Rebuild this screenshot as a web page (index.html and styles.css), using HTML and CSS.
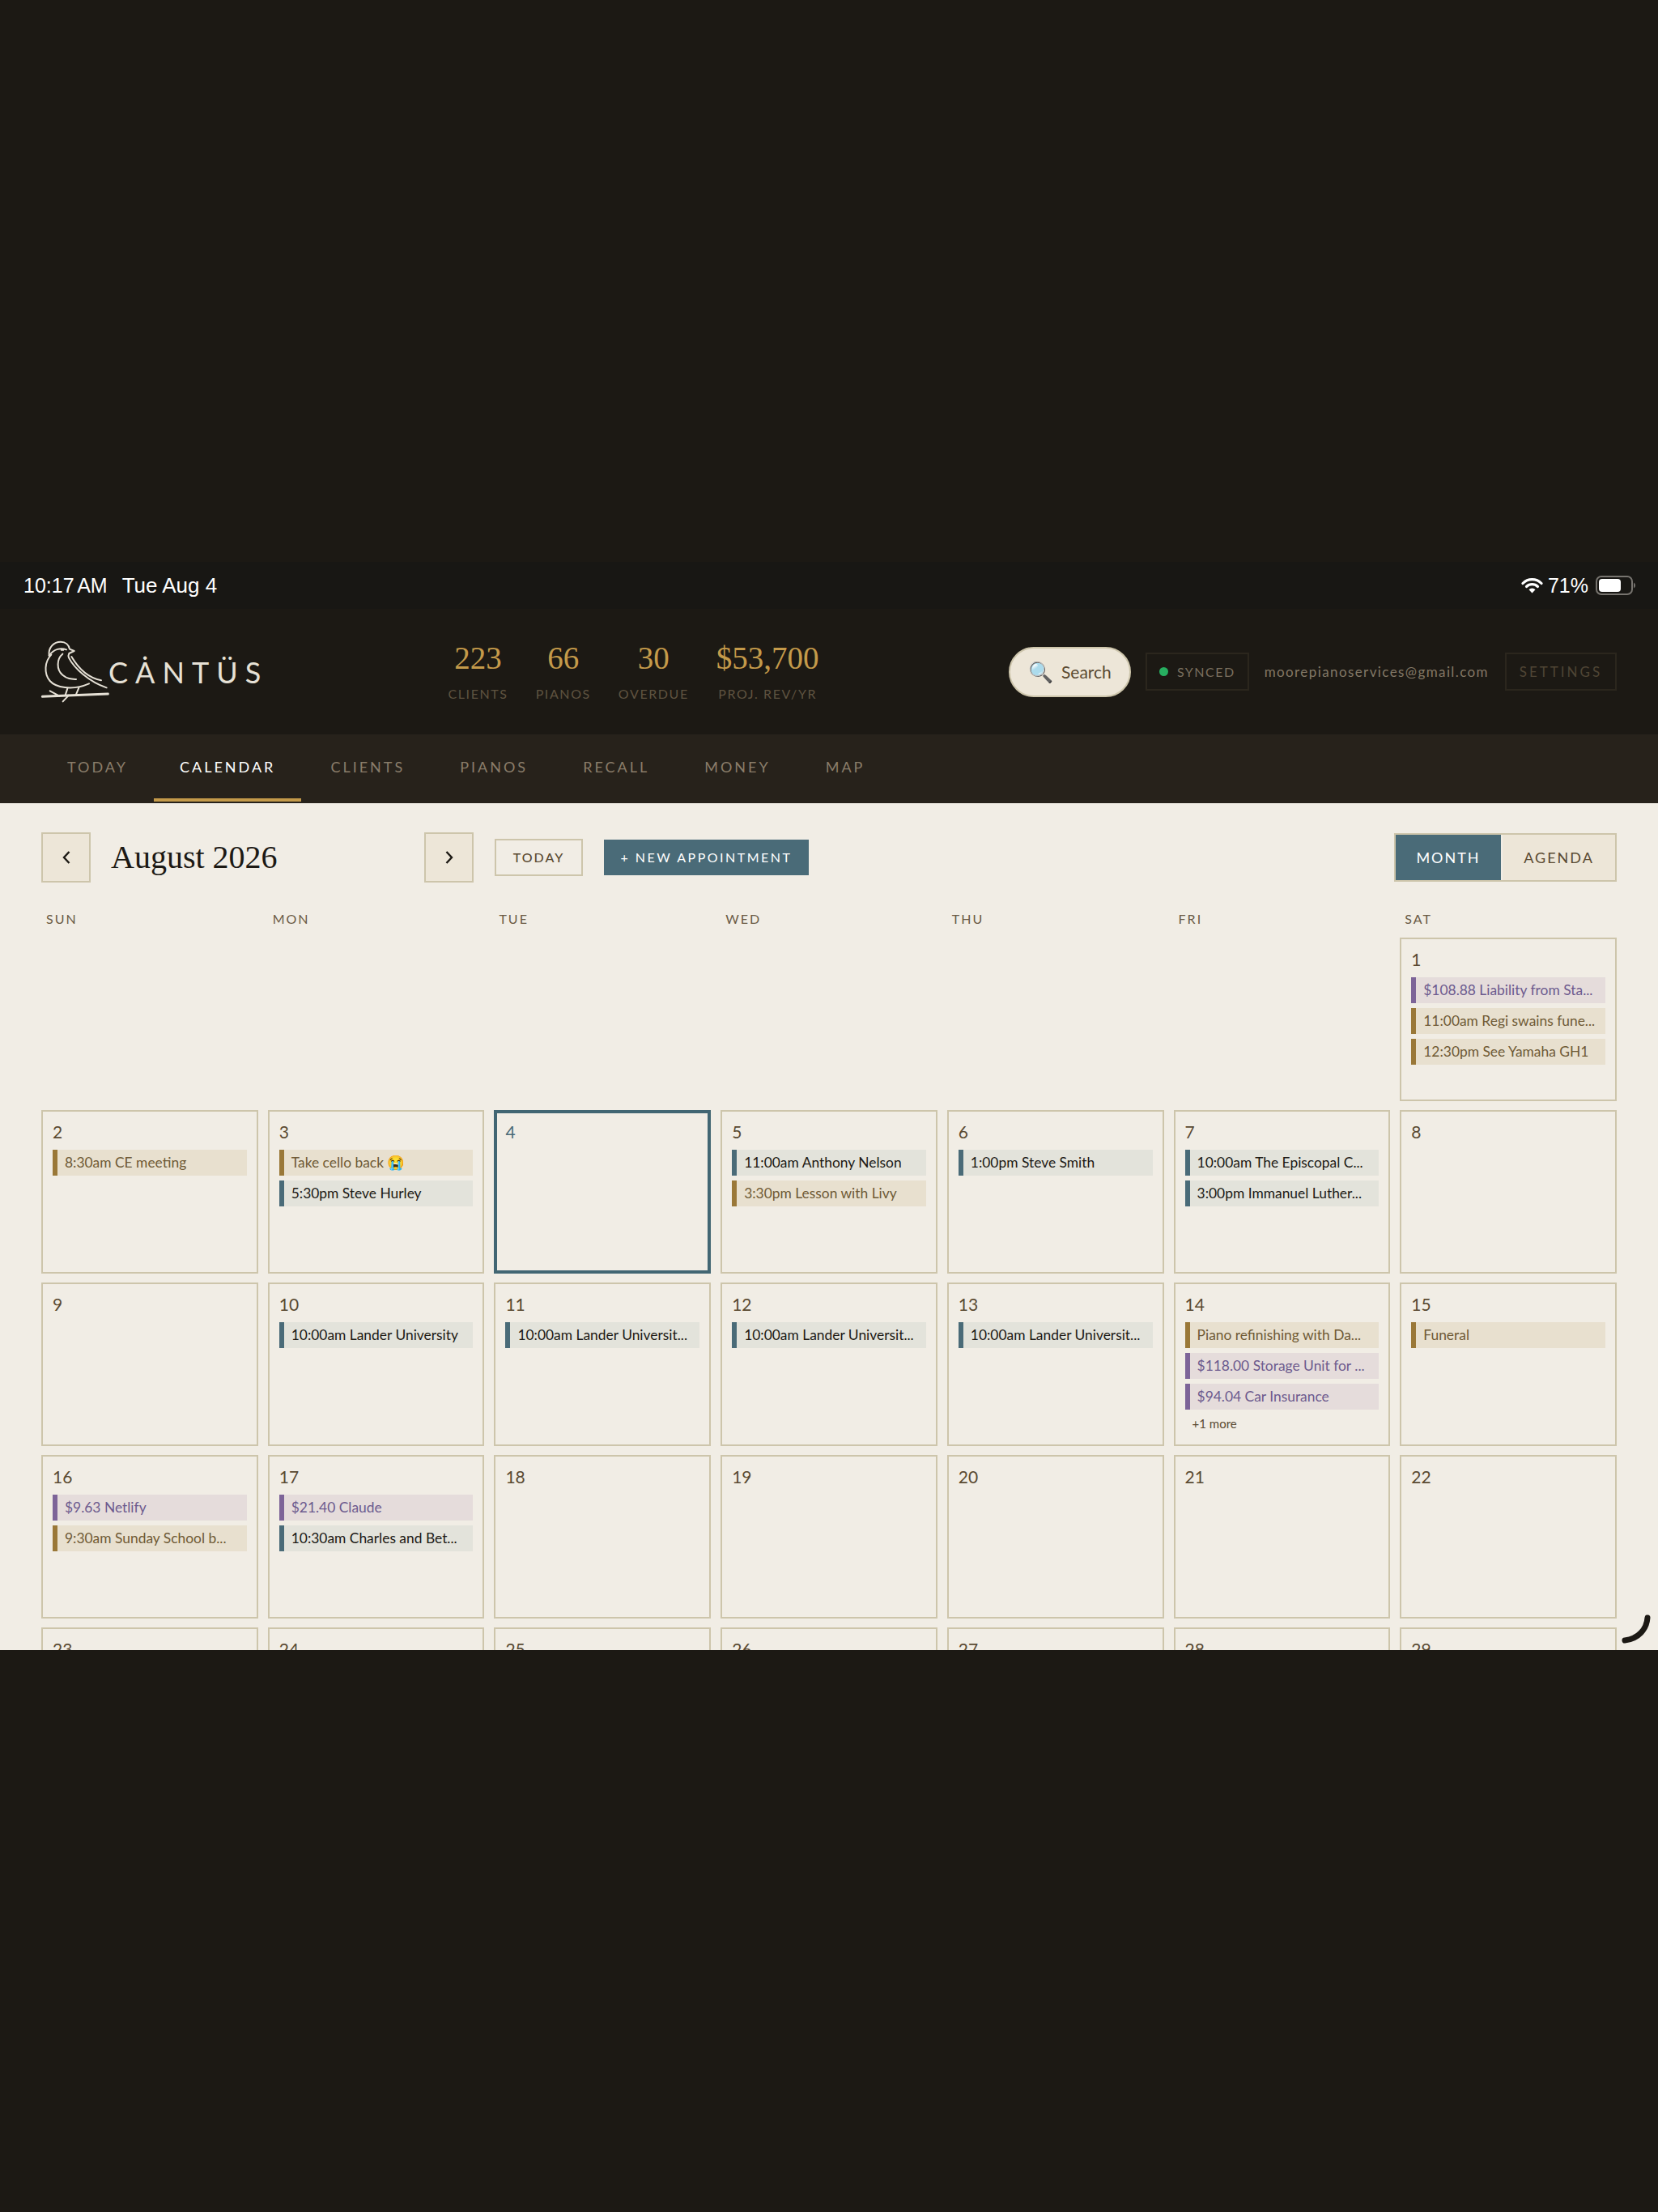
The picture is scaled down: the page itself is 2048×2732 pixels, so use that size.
FILE: index.html
```html
<!DOCTYPE html>
<html lang="en">
<head>
<meta charset="UTF-8">
<meta name="viewport" content="width=device-width, initial-scale=1.0">
<title>Cantus - Calendar</title>
<link rel="stylesheet" href="styles.css">
</head>
<body>
  <div class="statusbar">
    <div class="status-left"><span class="clock">10:17 AM</span><span class="date">Tue Aug 4</span></div>
    <div class="status-right">
      <svg class="wifi" width="27" height="20" viewBox="0 0 27 20">
        <path d="M2 7.5a16 16 0 0 1 23 0" fill="none" stroke="#fff" stroke-width="3.2" stroke-linecap="round"/>
        <path d="M6.5 11.5a10 10 0 0 1 14 0" fill="none" stroke="#fff" stroke-width="3.2" stroke-linecap="round"/>
        <path d="M13.5 19.5l-4-4.3a5.6 5.6 0 0 1 8 0z" fill="#fff"/>
      </svg>
      <span class="battery-pct">71%</span>
      <svg class="battery" width="50" height="24" viewBox="0 0 50 24">
        <rect x="1" y="1" width="44" height="22" rx="6" fill="none" stroke="#77746f" stroke-width="2"/>
        <rect x="4" y="4" width="27" height="16" rx="4" fill="#fff"/>
        <path d="M47 8.5a4 4 0 0 1 0 7z" fill="#77746f"/>
      </svg>
    </div>
  </div>

  <header class="header">
    <div class="logo">
      <svg class="bird" width="85" height="79" viewBox="90 60 255 235" fill="none" stroke="#e6e1d6" stroke-width="6" stroke-linecap="round" stroke-linejoin="round">
        <path d="M122 118C118 88 140 67 165 67C183 67 195 78 198 94L215 101L196 110C193 116 192 120 195 126C215 165 270 215 335 237"/>
        <path d="M122 118C140 93 165 88 186 96"/>
        <path d="M168 97h6" stroke-width="7"/>
        <path d="M130 115C105 140 102 185 125 212C145 235 205 250 270 222"/>
        <path d="M172 112C150 130 148 170 172 190C190 205 205 205 222 206"/>
        <path d="M205 122C230 165 265 200 315 210"/>
        <path d="M190 240L182 265M232 238L222 262"/>
        <path d="M97 270L340 260" stroke-width="9"/>
        <path d="M125 249L160 268M173 288L195 265"/>
      </svg>
      <span class="wordmark">CȦNTÜS</span>
    </div>

    <div class="stats">
      <div class="stat"><div class="stat-num">223</div><div class="stat-label">Clients</div></div>
      <div class="stat"><div class="stat-num">66</div><div class="stat-label">Pianos</div></div>
      <div class="stat"><div class="stat-num">30</div><div class="stat-label">Overdue</div></div>
      <div class="stat"><div class="stat-num">$53,700</div><div class="stat-label">Proj. Rev/Yr</div></div>
    </div>

    <div class="header-right">
      <button class="search-btn"><span class="search-icon">🔍</span>Search</button>
      <div class="synced"><span class="dot"></span>SYNCED</div>
      <span class="email">moorepianoservices@gmail.com</span>
      <button class="settings-btn">SETTINGS</button>
    </div>
  </header>

  <nav class="nav">
    <a class="tab">TODAY</a>
    <a class="tab active">CALENDAR</a>
    <a class="tab">CLIENTS</a>
    <a class="tab">PIANOS</a>
    <a class="tab">RECALL</a>
    <a class="tab">MONEY</a>
    <a class="tab">MAP</a>
  </nav>

  <main class="main">
    <div class="toolbar">
      <button class="arrow-btn">
        <svg width="14" height="20" viewBox="0 0 14 20"><path d="M10.500 3L4 10l6.500 7" fill="none" stroke="#1c1914" stroke-width="2.400"/></svg>
      </button>
      <h1 class="month-title">August 2026</h1>
      <button class="arrow-btn">
        <svg width="14" height="20" viewBox="0 0 14 20"><path d="M3.500 3L10 10l-6.500 7" fill="none" stroke="#1c1914" stroke-width="2.400"/></svg>
      </button>
      <button class="today-btn">TODAY</button>
      <button class="new-btn">+ NEW APPOINTMENT</button>
      <div class="view-toggle">
        <button class="view-btn active">MONTH</button>
        <button class="view-btn">AGENDA</button>
      </div>
    </div>

    <div class="weekdays">
      <div>SUN</div><div>MON</div><div>TUE</div><div>WED</div><div>THU</div><div>FRI</div><div>SAT</div>
    </div>

    <div class="grid">
      <div class="blank"></div><div class="blank"></div><div class="blank"></div><div class="blank"></div><div class="blank"></div><div class="blank"></div>
      <div class="day"><div class="day-num">1</div>
        <div class="event money">$108.88 Liability from Sta...</div>
        <div class="event personal">11:00am Regi swains fune...</div>
        <div class="event personal">12:30pm See Yamaha GH1</div>
      </div>

      <div class="day"><div class="day-num">2</div>
        <div class="event personal">8:30am CE meeting</div>
      </div>
      <div class="day"><div class="day-num">3</div>
        <div class="event personal">Take cello back 😭</div>
        <div class="event appt">5:30pm Steve Hurley</div>
      </div>
      <div class="day today"><div class="day-num">4</div></div>
      <div class="day"><div class="day-num">5</div>
        <div class="event appt">11:00am Anthony Nelson</div>
        <div class="event personal">3:30pm Lesson with Livy</div>
      </div>
      <div class="day"><div class="day-num">6</div>
        <div class="event appt">1:00pm Steve Smith</div>
      </div>
      <div class="day"><div class="day-num">7</div>
        <div class="event appt">10:00am The Episcopal C...</div>
        <div class="event appt">3:00pm Immanuel Luther...</div>
      </div>
      <div class="day"><div class="day-num">8</div></div>

      <div class="day"><div class="day-num">9</div></div>
      <div class="day"><div class="day-num">10</div>
        <div class="event appt">10:00am Lander University</div>
      </div>
      <div class="day"><div class="day-num">11</div>
        <div class="event appt">10:00am Lander Universit...</div>
      </div>
      <div class="day"><div class="day-num">12</div>
        <div class="event appt">10:00am Lander Universit...</div>
      </div>
      <div class="day"><div class="day-num">13</div>
        <div class="event appt">10:00am Lander Universit...</div>
      </div>
      <div class="day"><div class="day-num">14</div>
        <div class="event personal">Piano refinishing with Da...</div>
        <div class="event money">$118.00 Storage Unit for ...</div>
        <div class="event money">$94.04 Car Insurance</div>
        <div class="more">+1 more</div>
      </div>
      <div class="day"><div class="day-num">15</div>
        <div class="event personal">Funeral</div>
      </div>

      <div class="day"><div class="day-num">16</div>
        <div class="event money">$9.63 Netlify</div>
        <div class="event personal">9:30am Sunday School b...</div>
      </div>
      <div class="day"><div class="day-num">17</div>
        <div class="event money">$21.40 Claude</div>
        <div class="event appt">10:30am Charles and Bet...</div>
      </div>
      <div class="day"><div class="day-num">18</div></div>
      <div class="day"><div class="day-num">19</div></div>
      <div class="day"><div class="day-num">20</div></div>
      <div class="day"><div class="day-num">21</div></div>
      <div class="day"><div class="day-num">22</div></div>

      <div class="day"><div class="day-num">23</div></div>
      <div class="day"><div class="day-num">24</div></div>
      <div class="day"><div class="day-num">25</div></div>
      <div class="day"><div class="day-num">26</div></div>
      <div class="day"><div class="day-num">27</div></div>
      <div class="day"><div class="day-num">28</div></div>
      <div class="day"><div class="day-num">29</div></div>
    </div>

    <svg class="corner" width="40" height="38" viewBox="0 0 40 38">
      <path d="M33 4C32 18 22 30 5 32" fill="none" stroke="#1c1914" stroke-width="7" stroke-linecap="round"/>
    </svg>
  </main>
</body>
</html>
```

FILE: styles.css
```css
body {
  margin: 0;
  height: 2732px;
  padding-top: 694px;
  box-sizing: border-box;
  overflow: hidden;
  background-color: #1c1914;
  font-family: Lato, "Noto Sans", sans-serif;
  color: #1c1914;
}

button {
  font-family: inherit;
  cursor: pointer;
}

/* ipad status bar */
.statusbar {
  height: 58px;
  padding: 0 27px 0 29px;
  display: flex;
  justify-content: space-between;
  align-items: center;
  background-color: #181714;
  color: #fff;
  font-family: "Liberation Sans", Arial, sans-serif;
  font-size: 25px;
}

.status-left {
  display: flex;
  align-items: center;
  gap: 18px;
}

.clock {
  word-spacing: -2px;
}

.date {
  font-size: 26px;
}

.status-right {
  display: flex;
  align-items: center;
  gap: 9px;
}

.wifi {
  margin-right: -3px;
}

/* header */
.header {
  height: 155px;
  padding: 0 51px 0 50px;
  display: flex;
  justify-content: space-between;
  align-items: center;
}

.logo {
  display: flex;
  align-items: center;
}

.wordmark {
  font-size: 36px;
  letter-spacing: 9px;
  color: #e6e1d6;
  margin-left: -1px;
}

.stats {
  margin-right: 12px;
  padding-bottom: 4px;
  display: flex;
  gap: 34px;
}

.stat {
  text-align: center;
}

.stat-num {
  font-family: "Liberation Serif", serif;
  font-size: 39px;
  line-height: 48px;
  color: #c49a4a;
}

.stat-label {
  margin-top: 10px;
  font-size: 16px;
  letter-spacing: 1.6px;
  text-transform: uppercase;
  color: #5f5340;
}

.header-right {
  display: flex;
  align-items: center;
}

.search-btn {
  width: 151px;
  height: 62px;
  padding: 0;
  display: flex;
  align-items: center;
  justify-content: center;
  gap: 10px;
  border: 2px solid #cdc5ab;
  border-radius: 31px;
  background-color: #ede6d8;
  font-size: 21px;
  color: #5a4a32;
}

.search-icon {
  font-size: 25px;
}

.synced {
  height: 47px;
  box-sizing: border-box;
  margin-left: 18px;
  padding: 0 15px;
  display: flex;
  align-items: center;
  gap: 11px;
  border: 2px solid #2b261d;
  font-size: 16px;
  letter-spacing: 1.5px;
  color: #7a6f5e;
}

.dot {
  width: 11px;
  height: 11px;
  border-radius: 50%;
  background-color: #27ae60;
}

.email {
  margin-left: 19px;
  font-size: 17px;
  letter-spacing: 1.4px;
  color: #837866;
}

.settings-btn {
  height: 47px;
  width: 138px;
  margin-left: 20px;
  padding: 0;
  border: 2px solid #2b261d;
  background: none;
  font-size: 17px;
  letter-spacing: 3px;
  color: #4f4535;
}

/* nav tabs */
.nav {
  height: 85px;
  padding-left: 51px;
  display: flex;
  gap: 4px;
  background-color: #27221b;
}

.tab {
  padding: 0 32px;
  display: flex;
  align-items: center;
  font-size: 18px;
  letter-spacing: 3px;
  color: #8a7d6a;
  border-bottom: 4px solid transparent;
  margin-bottom: 2px;
}

.tab:first-child {
  padding-right: 28px;
}

.tab.active {
  color: #fff;
  border-bottom-color: #c49a4a;
}

/* calendar */
.main {
  position: relative;
  height: 1046px;
  padding: 36px 51px 0;
  box-sizing: border-box;
  overflow: hidden;
  background-color: #f1ede5;
}

.toolbar {
  height: 61px;
  display: flex;
  align-items: center;
}

.arrow-btn {
  width: 61px;
  height: 62px;
  padding: 0;
  display: flex;
  align-items: center;
  justify-content: center;
  border: 2px solid #cdc5ab;
  background-color: #ede6d8;
}

.month-title {
  width: 387px;
  margin: 0 0 0 25px;
  font-family: "Liberation Serif", serif;
  font-weight: 400;
  font-size: 40px;
  color: #1c1914;
}

.today-btn {
  width: 109px;
  height: 46px;
  margin-left: 26px;
  padding: 0;
  border: 2px solid #cdc5ab;
  background: none;
  font-size: 16px;
  font-weight: 500;
  letter-spacing: 2px;
  color: #5a4a32;
}

.new-btn {
  width: 253px;
  height: 44px;
  margin-left: 26px;
  padding: 0;
  border: none;
  background-color: #4a6b78;
  font-size: 16px;
  letter-spacing: 2.5px;
  color: #fff;
}

.view-toggle {
  margin-left: auto;
  display: flex;
  border: 2px solid #cdc5ab;
  background-color: #ede6d8;
}

.view-btn {
  width: 130px;
  height: 56px;
  padding: 0;
  border: none;
  background: none;
  font-size: 18px;
  letter-spacing: 2px;
  color: #5a4a32;
}

.view-btn + .view-btn {
  width: 141px;
  border-left: 2px solid #f1ede5;
}

.view-btn.active {
  background-color: #4a6b78;
  color: #fff;
}

.weekdays {
  margin-top: 37px;
  display: grid;
  grid-template-columns: repeat(7, 1fr);
  gap: 12px;
  font-size: 16px;
  line-height: 17px;
  letter-spacing: 2px;
  color: #6a5a44;
}

.weekdays div {
  padding-left: 6px;
}

.grid {
  margin-top: 15px;
  display: grid;
  grid-template-columns: repeat(7, 1fr);
  grid-auto-rows: 202px;
  gap: 11px 12px;
}

.day {
  padding: 11px 12px 12px;
  min-width: 0;
  border: 2px solid #cdc5ab;
}

.day-num {
  height: 28px;
  margin-bottom: 8px;
  font-size: 21px;
  line-height: 28px;
  color: #5a4a32;
}

.day.today {
  padding: 9px 10px 10px;
  border: 4px solid #426673;
}

.day.today .day-num {
  color: #4a6b78;
}

.event {
  height: 32px;
  margin-bottom: 6px;
  padding-left: 9px;
  box-sizing: border-box;
  border-left: 6px solid;
  font-size: 17.4px;
  line-height: 32px;
  white-space: nowrap;
  overflow: hidden;
}

.event.appt {
  border-color: #4a6b78;
  background-color: #e3e3db;
  color: #1c1914;
}

.event.personal {
  border-color: #9a7838;
  background-color: #e8e0cf;
  color: #6f5a35;
}

.event.money {
  border-color: #7d6498;
  background-color: #e5dcdb;
  color: #6c5a8e;
}

.more {
  padding-left: 9px;
  font-size: 15px;
  line-height: 22px;
  color: #5a4a32;
}

.corner {
  position: absolute;
  right: 6px;
  bottom: 6px;
}
```
